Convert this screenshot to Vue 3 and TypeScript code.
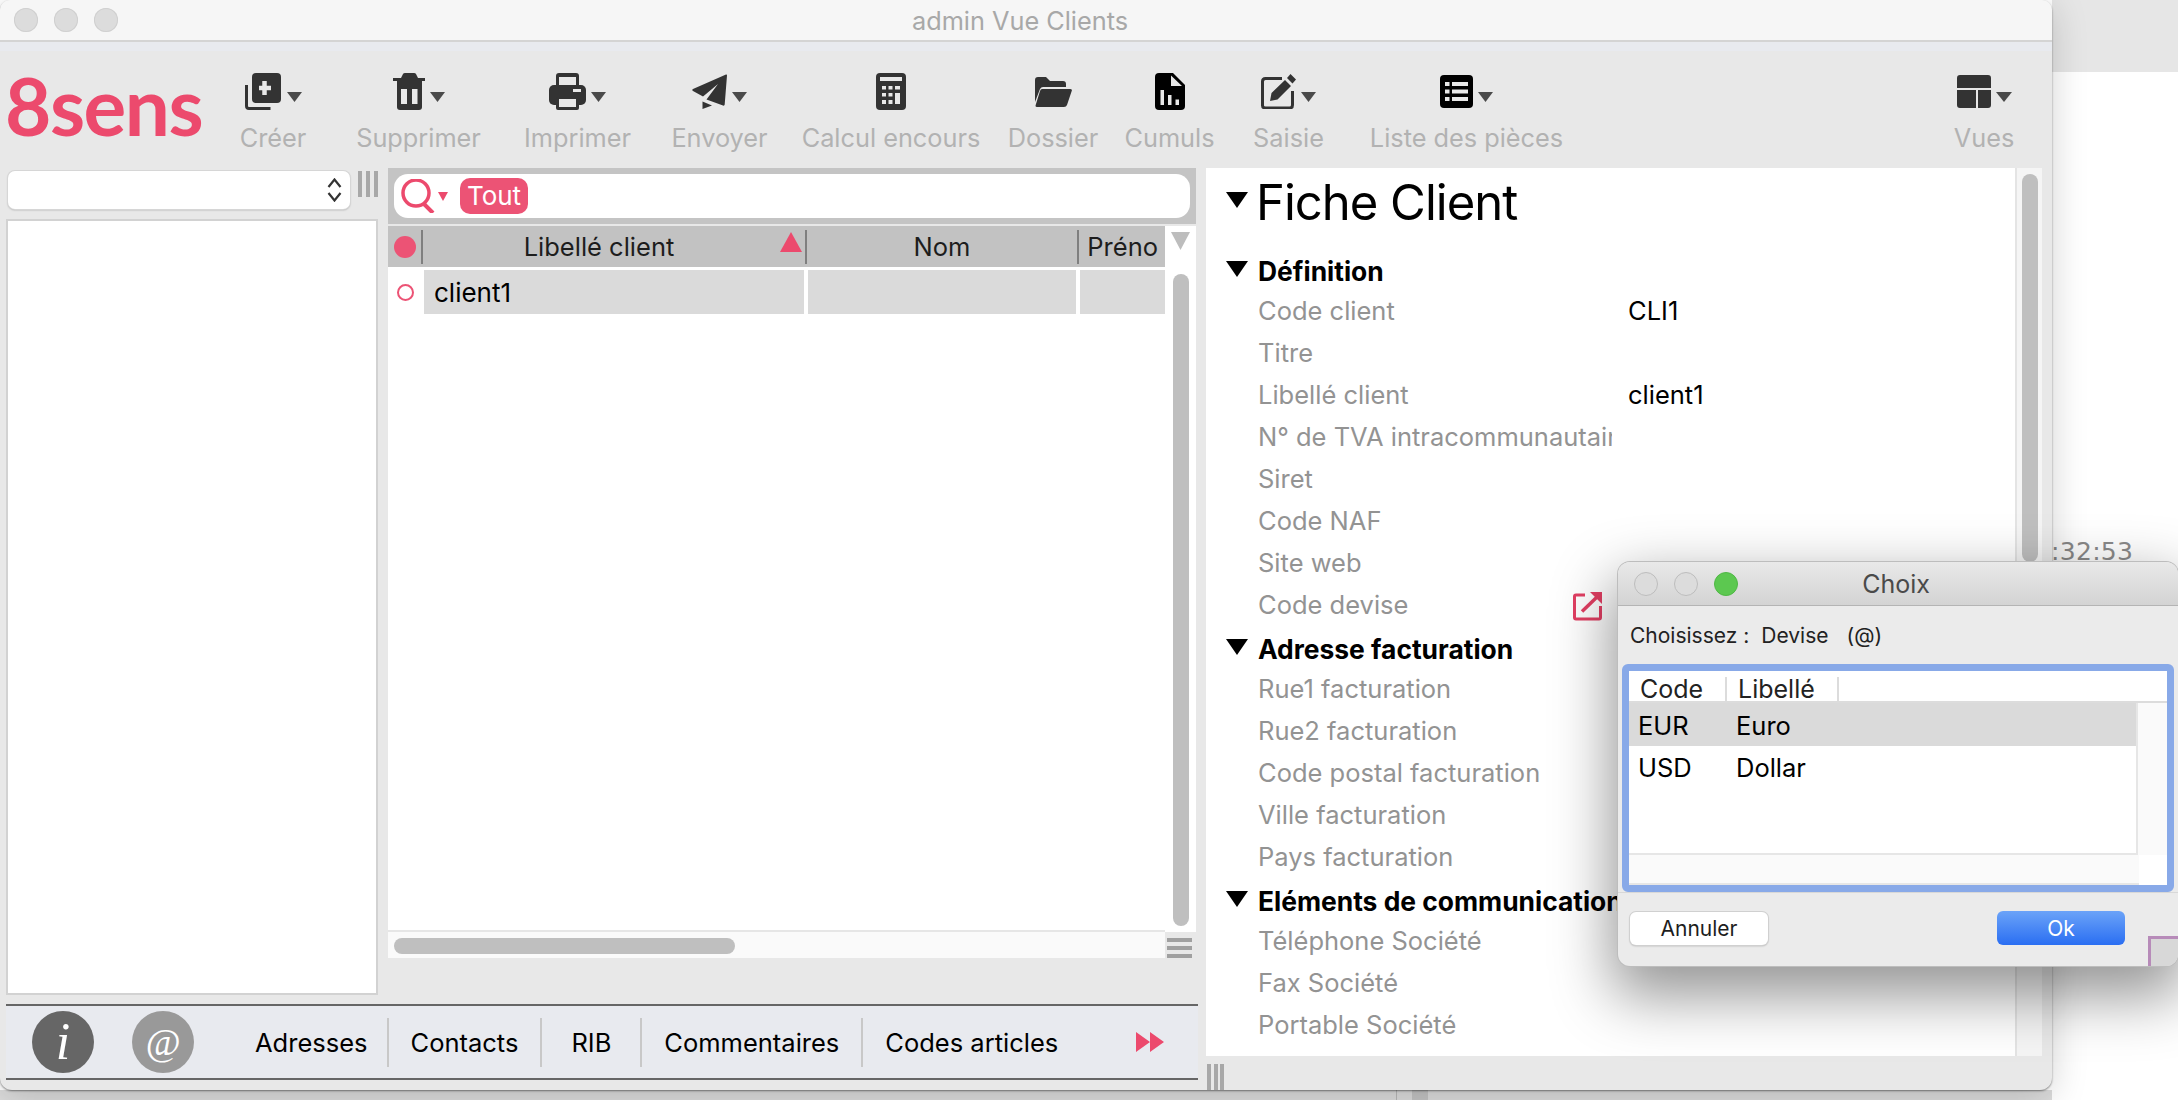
<script setup lang="ts">
interface Tool { label: string; icon: string; width: number; caret: boolean }
const tools: Tool[] = [
  { label: 'Créer', icon: 'create', width: 102, caret: true },
  { label: 'Supprimer', icon: 'trash', width: 189, caret: true },
  { label: 'Imprimer', icon: 'print', width: 129, caret: true },
  { label: 'Envoyer', icon: 'send', width: 155, caret: true },
  { label: 'Calcul encours', icon: 'calc', width: 188, caret: false },
  { label: 'Dossier', icon: 'folder', width: 136, caret: false },
  { label: 'Cumuls', icon: 'file', width: 97, caret: false },
  { label: 'Saisie', icon: 'edit', width: 141, caret: true },
  { label: 'Liste des pièces', icon: 'list', width: 215, caret: true },
]
const toolCols = tools.map(t => t.width + 'px').join(' ')
const sections = [
  { title: 'Définition', rows: [
    { label: 'Code client', value: 'CLI1' }, { label: 'Titre', value: '' },
    { label: 'Libellé client', value: 'client1' }, { label: 'N° de TVA intracommunautaire', value: '' },
    { label: 'Siret', value: '' }, { label: 'Code NAF', value: '' }, { label: 'Site web', value: '' },
    { label: 'Code devise', value: '', link: true },
  ] },
  { title: 'Adresse facturation', rows: [
    { label: 'Rue1 facturation', value: '' }, { label: 'Rue2 facturation', value: '' },
    { label: 'Code postal facturation', value: '' }, { label: 'Ville facturation', value: '' },
    { label: 'Pays facturation', value: '' },
  ] },
  { title: 'Eléments de communication', rows: [
    { label: 'Téléphone Société', value: '' }, { label: 'Fax Société', value: '' }, { label: 'Portable Société', value: '' },
  ] },
]
const tabs = ['Adresses', 'Contacts', 'RIB', 'Commentaires', 'Codes articles']
</script>

<template>
  <div class="desktop">
    <div class="back-strip"></div>
    <div class="back-bars"><i></i><b></b></div>
    <div class="clock">:32:53</div>

    <section class="window">
      <header class="titlebar">
        <div class="lights"><span></span><span></span><span></span></div>
        <span class="wintitle">admin Vue Clients</span>
      </header>
      <div class="band"></div>

      <div class="toolbar">
        <div class="logo">8sens</div>
        <div class="tools" :style="{ gridTemplateColumns: toolCols }">
          <div v-for="t in tools" :key="t.label" class="tool">
            <div class="tool-icon">
              <svg v-if="t.icon === 'create'" width="37" height="37" viewBox="0 0 37 37">
                <path d="M1.5 12V33q0 2.500 2.500 2.500H25.500" fill="none" stroke="#333" stroke-width="3" />
                <rect x="7" y="0" width="29" height="30" rx="4" fill="#333" />
                <path d="M19.500 8v14M14 15h12" stroke="#e8e8e8" stroke-width="4.500" fill="none" />
              </svg>
              <svg v-else-if="t.icon === 'trash'" width="32" height="37" viewBox="0 0 32 37">
                <path d="M0 8V5h8l2-4q.5-1 2-1h9q1.500 0 2 1l2 4h7v3z" fill="#333" />
                <path d="M4 8h25v26q0 3-3 3H7q-3 0-3-3z" fill="#333" />
                <path d="M8 16h6v15H8zM19 16h5.500v15H19z" fill="#e8e8e8" />
              </svg>
              <svg v-else-if="t.icon === 'print'" width="37" height="37" viewBox="0 0 37 37">
                <path d="M7 13V3q0-3 3-3h17q3 0 3 3v10z" fill="#333" />
                <rect x="0" y="12" width="37" height="20" rx="5" fill="#333" />
                <rect x="7" y="24" width="23" height="13" rx="2" fill="#333" />
                <path d="M10 4h17v8H10zM10 26h17v8H10zM24 16h8v3h-8z" fill="#e8e8e8" />
              </svg>
              <svg v-else-if="t.icon === 'send'" width="35" height="35" viewBox="0 0 35 35">
                <path d="M34 0.500 1 15q-1.500 1 0 2l10 5.500L26 10 14.500 25.500 31 31.500q1.500.5 1.700-1L35 1.500q0-1.500-1-1z" fill="#333" />
                <path d="M10.500 27.500 20 31.500l-9.500 3.500z" fill="#333" />
              </svg>
              <svg v-else-if="t.icon === 'calc'" width="30" height="37" viewBox="0 0 30 37">
                <rect width="30" height="37" rx="4" fill="#333" />
                <path d="M4 4h22v4H4zM6 13h4v3.500H6zM12.500 13h4v3.500h-4zM19 13h5v3.500h-5zM6 20h4v3.500H6zM12.500 20h4v3.500h-4zM19 20h5v11h-5zM6 27h4v4H6zM12.500 27h4v4h-4z" fill="#e8e8e8" />
              </svg>
              <svg v-else-if="t.icon === 'folder'" width="37" height="30" viewBox="0 0 37 30">
                <path d="M0 3q0-3 3-3h8l4 4h13q3 0 3 3v3H8q-2 0-3 2L0 25z" fill="#333" />
                <path d="M7 12h28q2.500 0 1.700 2L32 28q-.7 2-3 2H2q-2 0-1.300-2L5 14q.7-2 2-2z" fill="#333" />
              </svg>
              <svg v-else-if="t.icon === 'file'" width="30" height="37" viewBox="0 0 30 37">
                <path d="M4 0h14l12 12v21q0 4-4 4H4q-4 0-4-4V4q0-4 4-4z" fill="#000" />
                <path d="M16 2.500V13h11zM5.500 17h3.500v15H5.500zM13 22h3.500v10H13zM20.500 26.500H24V32h-3.500z" fill="#e8e8e8" />
              </svg>
              <svg v-else-if="t.icon === 'edit'" width="35" height="35" viewBox="0 0 35 35">
                <path d="M21 4.500H4.500q-3 0-3 3v24q0 2.500 3 2.500h24q3 0 3-3V17" fill="none" stroke="#333" stroke-width="3" />
                <path d="M9 27l1.500-8L24 6l6 6-13.500 13.500zM26 4l3.500-4L35 5.500 31.500 9.500z" fill="#333" />
              </svg>
              <svg v-else-if="t.icon === 'list'" width="33" height="33" viewBox="0 0 33 33">
                <rect width="33" height="33" rx="4" fill="#000" />
                <path d="M5 7h4.500v4H5zM12 7h16v4H12zM5 14.500h4.500v4H5zM12 14.500h16v4H12zM5 22h4.500v4H5zM12 22h16v4H12z" fill="#e8e8e8" />
              </svg>
              <svg v-if="t.caret" class="caret" width="15" height="10" viewBox="0 0 15 10"><path d="M0 0h15L7.500 10z" fill="#4a4a4a" /></svg>
            </div>
            <span class="tool-label">{{ t.label }}</span>
          </div>
        </div>
        <div class="tool vues">
          <div class="tool-icon">
            <svg width="34" height="33" viewBox="0 0 34 33">
              <path d="M3 0h28q3 0 3 3v10H0V3q0-3 3-3zM0 15h19v18H3q-3 0-3-3zM21 15h13v15q0 3-3 3H21z" fill="#333" />
            </svg>
            <svg class="caret" width="16" height="10" viewBox="0 0 16 10"><path d="M0 0h16L8 10z" fill="#4a4a4a" /></svg>
          </div>
          <span class="tool-label">Vues</span>
        </div>
      </div>

      <div class="body">
        <div class="left-area">
          <div class="panes">
            <aside class="tree">
              <div class="tree-top">
                <div class="select">
                  <svg width="15" height="24" viewBox="0 0 15 24"><path d="M1.500 9 7.500 1.500 13.500 9M1.500 15l6 7.500 6-7.500" fill="none" stroke="#333" stroke-width="2.200" /></svg>
                </div>
                <div class="grip"><i></i><i></i><i></i></div>
              </div>
              <div class="tree-list"></div>
            </aside>

            <main class="center">
              <div class="search">
                <div class="search-field">
                  <svg width="47" height="34" viewBox="0 0 47 34">
                    <circle cx="15" cy="14" r="13" fill="none" stroke="#ec4a6d" stroke-width="3.500" />
                    <path d="M23 25l9 9" stroke="#ec4a6d" stroke-width="4" />
                    <path d="M37 13h10l-5 9z" fill="#ec4a6d" />
                  </svg>
                  <span class="pill">Tout</span>
                </div>
              </div>
              <div class="grid-wrap">
                <div class="grid-main">
                  <div class="head">
                    <div class="h-dot"><span></span></div>
                    <div class="h-col c-lib"><span class="lib-text">Libellé client</span><svg class="sort" width="22" height="20" viewBox="0 0 22 20"><path d="M11 0l11 20H0z" fill="#ec4a6d" /></svg></div>
                    <div class="h-col c-nom">Nom</div>
                    <div class="h-col c-pre">Préno</div>
                  </div>
                  <div class="row">
                    <div class="r-dot"><span></span></div>
                    <div class="cell c-lib">client1</div>
                    <div class="cell c-nom"></div>
                    <div class="cell c-pre"></div>
                  </div>
                  <div class="rows-fill"></div>
                  <div class="hscroll"><span></span></div>
                </div>
                <div class="vscroll">
                  <svg class="up" width="19" height="18" viewBox="0 0 19 18"><path d="M0 0h19L9.500 18z" fill="#bdbdbd" /></svg>
                  <span class="thumb"></span>
                  <div class="menu"><i></i><i></i><i></i></div>
                </div>
              </div>
            </main>
          </div>

          <nav class="tabs">
            <span class="round dark">i</span>
            <span class="round mid">@</span>
            <div class="tab-list">
              <span v-for="t in tabs" :key="t" class="tab">{{ t }}</span>
            </div>
            <svg class="more" width="28" height="20" viewBox="0 0 28 20"><path d="M0 0l14 10L0 20zM14 0l14 10-14 10z" fill="#ec4a6d" /></svg>
          </nav>
        </div>

        <div class="right-area">
          <div class="fiche">
            <div class="fiche-scroll">
              <h1 class="fiche-title"><svg width="22" height="16" viewBox="0 0 22 16"><path d="M0 0h22L11 16z" fill="#000" /></svg><span>Fiche Client</span></h1>
              <div v-for="s in sections" :key="s.title" class="sec">
                <h2 class="sec-title"><svg width="22" height="16" viewBox="0 0 22 16"><path d="M0 0h22L11 16z" fill="#000" /></svg><span>{{ s.title }}</span></h2>
                <div v-for="r in s.rows" :key="r.label" class="f-row">
                  <span class="f-label">{{ r.label }}</span>
                  <svg v-if="r.link" class="ext" width="29" height="29" viewBox="0 0 29 29">
                    <path d="M12 3H3q-1.500 0-1.500 1.500v21q0 1.500 1.500 1.500h23q1.500 0 1.500-1.500V14" fill="none" stroke="#e23f63" stroke-width="3" />
                    <path d="M9 19.500 24 5" stroke="#e23f63" stroke-width="3.500" fill="none" />
                    <path d="M17 0h12v12z" fill="#e23f63" />
                  </svg>
                  <span v-if="r.value" class="f-value">{{ r.value }}</span>
                </div>
              </div>
            </div>
            <div class="fiche-track"><span></span></div>
          </div>
          <div class="grip low"><i></i><i></i><i></i></div>
        </div>
      </div>
    </section>

    <section class="dialog">
      <header class="d-title">
        <div class="d-lights"><span></span><span></span><span class="green"></span></div>
        <span class="d-name">Choix</span>
      </header>
      <div class="d-prompt"><span>Choisissez :</span><span>Devise</span><span>(@)</span></div>
      <div class="d-ring">
        <div class="d-head">
          <span class="dh-code">Code</span>
          <span class="dh-lib">Libellé</span>
        </div>
        <div class="d-table">
          <div class="d-rows">
            <div class="d-row sel"><span>EUR</span><span>Euro</span></div>
            <div class="d-row"><span>USD</span><span>Dollar</span></div>
          </div>
          <div class="d-vtrack"></div>
        </div>
        <div class="d-htrack"></div>
      </div>
      <footer class="d-foot">
        <button class="btn">Annuler</button>
        <button class="btn ok">Ok</button>
      </footer>
      <div class="d-resize"></div>
    </section>
  </div>
</template>

<style>
html, body { margin: 0; background: #fff; }
</style>

<style scoped>
.desktop {
  position: relative; width: 2178px; height: 1100px; overflow: hidden; background: #fff;
  font-family: Inter, "Liberation Sans", sans-serif;
}
.back-strip { position: absolute; left: 2052px; right: 0; top: 0; height: 72px; background: #e6e6e6; }
.back-bars { position: absolute; left: 0; right: 126px; top: 1090px; height: 10px; background: #dcdcdc; }
.back-bars i { position: absolute; left: 1396px; width: 1px; top: 0; bottom: 0; background: #b8b8b8; }
.back-bars b { position: absolute; left: 1412px; width: 16px; top: 0; bottom: 0; background: #c4c4c4; }
.clock {
  position: absolute; left: 2051px; top: 535px; font-size: 25px; line-height: 34px; color: #8a8a8a;
  font-family: "DejaVu Sans", sans-serif; letter-spacing: 0.3px;
}

.window {
  position: absolute; left: 0; top: 0; width: 2052px; height: 1090px; background: #e8e8e8;
  border-radius: 10px 10px 12px 12px; display: flex; flex-direction: column;
  box-shadow: 0 1px 2px rgba(0,0,0,.45), 0 6px 36px rgba(0,0,0,.18); overflow: hidden;
}
.titlebar {
  position: relative; height: 40px; flex: none; background: #f6f6f6; border-bottom: 2px solid #d4d4d4;
  display: flex; align-items: center; justify-content: center; box-sizing: content-box;
}
.lights { position: absolute; left: 14px; top: 8px; display: flex; gap: 16px; }
.lights span { width: 24px; height: 24px; border-radius: 50%; background: #dcdcdc; box-shadow: inset 0 0 0 1px #d0d0d0; }
.wintitle { font-size: 25.300px; color: #a8a8a8; position: relative; left: -6px; }
.band { height: 9px; background: #e8eaef; flex: none; }

.toolbar { height: 117px; flex: none; display: flex; }
.logo {
  width: 222px; flex: none; box-sizing: border-box; padding-left: 5px; padding-top: 3px;
  font-family: Lato, sans-serif; font-weight: 700; font-size: 80px; line-height: 102px; color: #ec4a6d; letter-spacing: -1.500px;
}
.tools { display: grid; flex: none; }
.tool { display: flex; flex-direction: column; align-items: center; padding-top: 22px; box-sizing: border-box; white-space: nowrap; }
.tool-icon { height: 37px; display: flex; align-items: center; }
.caret { margin-left: 5px; margin-top: 11px; }
.tool-label { margin-top: 10px; font-size: 25.300px; line-height: 35px; color: #b2b2b2; }
.vues { margin-left: 370px; width: 80px; }

.body { flex: 1; display: flex; min-height: 0; }
.left-area { width: 1206px; flex: none; display: flex; flex-direction: column; }
.panes { height: 836px; flex: none; display: flex; }

.tree { width: 372px; margin-left: 6px; flex: none; display: flex; flex-direction: column; }
.tree-top { display: flex; padding-left: 2px; height: 51px; box-sizing: border-box; padding-top: 3px; }
.select {
  width: 342px; height: 38px; background: #fff; border-radius: 7px; box-sizing: border-box;
  box-shadow: 0 0 0 1px #d6d6d6, 0 1px 2px rgba(0,0,0,.35); display: flex; align-items: center; justify-content: flex-end; padding-right: 8px;
}
.grip { display: flex; gap: 3.500px; margin-left: 8px; height: 26px; }
.grip i { width: 4.500px; background: #a8a8a8; }
.tree-list { width: 372px; height: 776px; background: #fff; border: 2px solid #d2d2d2; box-sizing: border-box; }

.center { width: 808px; margin-left: 10px; flex: none; display: flex; flex-direction: column; }
.search { height: 56px; flex: none; background: #c4c4c4; box-sizing: border-box; padding: 6px 6px 6px 6px; }
.search-field {
  height: 44px; background: #fff; border-radius: 14px; display: flex; align-items: center; padding-left: 7px; gap: 12px;
}
.pill { background: #ec5375; color: #fff; font-size: 26px; line-height: 36px; height: 36px; border-radius: 10px; width: 68px; text-align: center; }
.grid-wrap { display: flex; margin-top: 2px; height: 732px; }
.grid-main { width: 777px; flex: none; display: flex; flex-direction: column; background: #fff; }
.head { height: 41px; flex: none; display: flex; background: #c2c2c2; }
.h-dot { width: 33px; display: flex; align-items: center; justify-content: center; flex: none; }
.h-dot span { width: 22px; height: 22px; border-radius: 50%; background: #ec5375; }
.h-col { position: relative; display: flex; align-items: center; justify-content: center; font-size: 25.500px; color: #1d1d1d; box-sizing: border-box; white-space: nowrap; }
.h-col::before { content: ""; position: absolute; left: 0; top: 4px; bottom: 3px; width: 2px; background: #7f7f7f; }
.lib-text { margin-right: 28px; }
.c-lib { width: 384px; flex: none; }
.c-nom { width: 272px; flex: none; padding-left: 2px; }
.c-pre { width: 88px; flex: none; justify-content: flex-end; padding-right: 7px; }
.sort { position: absolute; right: 3px; top: 6px; }
.row { height: 44px; flex: none; margin-top: 3px; display: flex; }
.r-dot { width: 36px; flex: none; display: flex; align-items: center; padding-left: 9px; box-sizing: border-box; }
.r-dot span { width: 17px; height: 17px; border-radius: 50%; border: 2.500px solid #ec5375; box-sizing: border-box; }
.cell { background: #dadada; font-size: 26px; line-height: 45px; color: #000; padding-left: 10px; box-sizing: border-box; margin-right: 4px; }
.row .c-lib { width: 380px; }
.row .c-nom { width: 268px; padding-left: 0; }
.row .c-pre { width: 85px; margin-right: 0; }
.rows-fill { flex: 1; border-bottom: 2px solid #e6e6e6; }
.hscroll { height: 26px; flex: none; background: #fafafa; padding: 6px 0 4px 6px; box-sizing: border-box; }
.hscroll span { display: block; width: 341px; height: 16px; border-radius: 8px; background: #bfbfbf; }
.vscroll { width: 31px; flex: none; position: relative; display: flex; flex-direction: column; align-items: center; background: linear-gradient(#fff 0 706px, #e8e8e8 706px); }
.up { margin-top: 6px; flex: none; }
.thumb { width: 16px; height: 652px; border-radius: 8px; background: #bfbfbf; margin-top: 24px; flex: none; }
.menu { margin-top: 12px; margin-right: 2px; width: 25px; display: flex; flex-direction: column; gap: 4px; flex: none; }
.menu i { height: 4px; background: #a0a0a0; }

.tabs {
  height: 72px; flex: none; margin-left: 6px; width: 1192px; border-top: 2px solid #666; border-bottom: 2px solid #666;
  background: #e8eaef; display: flex; align-items: center; position: relative;
}
.round {
  width: 62px; height: 62px; border-radius: 50%; display: flex; align-items: center; justify-content: center; flex: none;
  color: #fff; font-family: "Liberation Serif", serif; font-style: italic; font-size: 52px; line-height: 1;
}
.dark { background: #666; margin-left: 26px; }
.mid { background: #999; margin-left: 38px; font-size: 38px; }
.tab-list { display: flex; margin-left: 31px; height: 49px; align-items: center; }
.tab { font-size: 25.500px; color: #000; padding: 0 22px; height: 49px; line-height: 49px; border-left: 2px solid #c8c8c8; box-sizing: border-box; white-space: nowrap; }
.tab:first-child { border-left: 0; padding: 0 19px 0 30px; }
.tab:nth-child(3) { padding: 0 29px; }
.more { position: absolute; left: 1130px; top: 26px; }

.right-area { width: 846px; flex: none; display: flex; flex-direction: column; }
.fiche { height: 888px; flex: none; display: flex; width: 836px; }
.fiche-scroll { width: 809px; flex: none; background: #fff; box-sizing: border-box; padding-left: 20px; }
.fiche-title { margin: 0; height: 81px; display: flex; align-items: flex-start; font-weight: 400; color: #000; }
.fiche-title svg { margin-top: 24px; flex: none; }
.fiche-title span { font-size: 49px; line-height: 70px; margin-left: 8px; letter-spacing: -1px; }
.sec-title { margin: 0; height: 42px; display: flex; align-items: center; font-size: 26.400px; font-weight: 700; color: #000; }
.sec-title svg { flex: none; margin-top: -2px; }
.sec-title span { margin-left: 10px; margin-top: 2px; white-space: nowrap; }
.f-row { height: 42px; display: flex; align-items: center; position: relative; padding-left: 32px; font-size: 25.500px; line-height: 40px; }
.f-label { width: 354px; flex: none; overflow: hidden; white-space: nowrap; color: #939393; margin-top: -2px; }
.f-value { margin-left: 16px; color: #000; margin-top: -2px; }
.ext { position: absolute; left: 347px; top: 7px; }
.fiche-track { width: 27px; flex: none; background: #f5f5f5; border-left: 2px solid #e4e4e4; box-sizing: border-box; padding: 6px 0 0 5px; }
.fiche-track span { display: block; width: 16px; height: 388px; border-radius: 8px; background: #bfbfbf; }
.grip.low { margin: 8px 0 0 1px; gap: 2.500px; }
.grip.low i { width: 4px; }

.dialog {
  position: absolute; left: 1618px; top: 562px; width: 560px; height: 404px; background: #ebebeb; border-radius: 12px;
  box-shadow: 0 0 0 1px #bdbdbd, 0 24px 60px 6px rgba(0,0,0,.42); display: flex; flex-direction: column;
}
.d-title {
  height: 43px; flex: none; border-radius: 12px 12px 0 0; background: linear-gradient(#e9e9e9, #d3d3d3); border-bottom: 1px solid #b4b4b4;
  display: flex; align-items: center; justify-content: center; position: relative;
}
.d-lights { position: absolute; left: 16px; top: 10px; display: flex; gap: 16px; }
.d-lights span { width: 24px; height: 24px; border-radius: 50%; box-sizing: border-box; border: 1px solid #bdbdbd; background: #dcdcdc; }
.d-lights .green { background: #5cc850; border-color: #4fb845; }
.d-name { font-size: 25px; color: #4a4a4a; position: relative; left: -2px; }
.d-prompt { height: 58px; flex: none; display: flex; align-items: center; padding-left: 12px; font-size: 21px; color: #222; }
.d-prompt span:nth-child(2) { margin-left: 12px; }
.d-prompt span:nth-child(3) { margin-left: 18px; }
.d-ring {
  margin-left: 4px; width: 552px; height: 228px; box-sizing: border-box; border: 7px solid #88a9e8; border-radius: 6px; background: #fff; flex: none;
  display: flex; flex-direction: column;
}
.d-head { height: 30px; flex: none; border-bottom: 2px solid #dcdcdc; box-sizing: content-box; display: flex; font-size: 25px; color: #222; line-height: 36px; position: relative; }
.dh-code { width: 97px; box-sizing: border-box; padding-left: 11px; }
.dh-lib { width: 112px; box-sizing: border-box; padding-left: 12px; }
.dh-code::after, .dh-lib::after { content: ""; position: absolute; top: 6px; height: 24px; width: 2px; background: #dcdcdc; }
.dh-code::after { left: 96px; }
.dh-lib::after { left: 208px; }
.d-table { display: flex; height: 152px; flex: none; }
.d-rows { width: 509px; flex: none; border-bottom: 2px solid #e6e6e6; border-right: 2px solid #e6e6e6; box-sizing: border-box; }
.d-vtrack { flex: 1; background: #fafafa; }
.d-row { height: 42px; display: flex; align-items: center; font-size: 25.500px; color: #000; }
.d-row.sel { background: #dadada; height: 43px; padding-top: 1px; box-sizing: border-box; }
.d-row span:first-child { width: 107px; padding-left: 9px; box-sizing: border-box; }
.d-htrack { flex: 1; background: #fafafa; width: 510px; border-bottom: 2px solid #e6e6e6; box-sizing: border-box; }
.d-foot { flex: 1; display: flex; justify-content: space-between; padding: 19px 53px 0 12px; border-top: 1px solid #d8d8d8; box-sizing: border-box; }
.btn { height: 33px; font: 400 21px Inter, "Liberation Sans", sans-serif; padding: 0; border: 0; width: 138px; background: #fff; color: #1d1d1d; border-radius: 6px; box-shadow: 0 0 0 1px #d0d0d0, 0 1px 2px rgba(0,0,0,.3); }
.btn.ok { width: 128px; height: 34px; margin-top: -1px; color: #fff; background: linear-gradient(#6ba3f8, #2a6ef2); box-shadow: none; }
.d-resize { position: absolute; right: 0; bottom: 0; width: 30px; height: 30px; background: #d8d8d8; border-top: 3px solid #b78bb9; border-left: 3px solid #b78bb9; box-sizing: border-box; border-bottom-right-radius: 12px; }
</style>
